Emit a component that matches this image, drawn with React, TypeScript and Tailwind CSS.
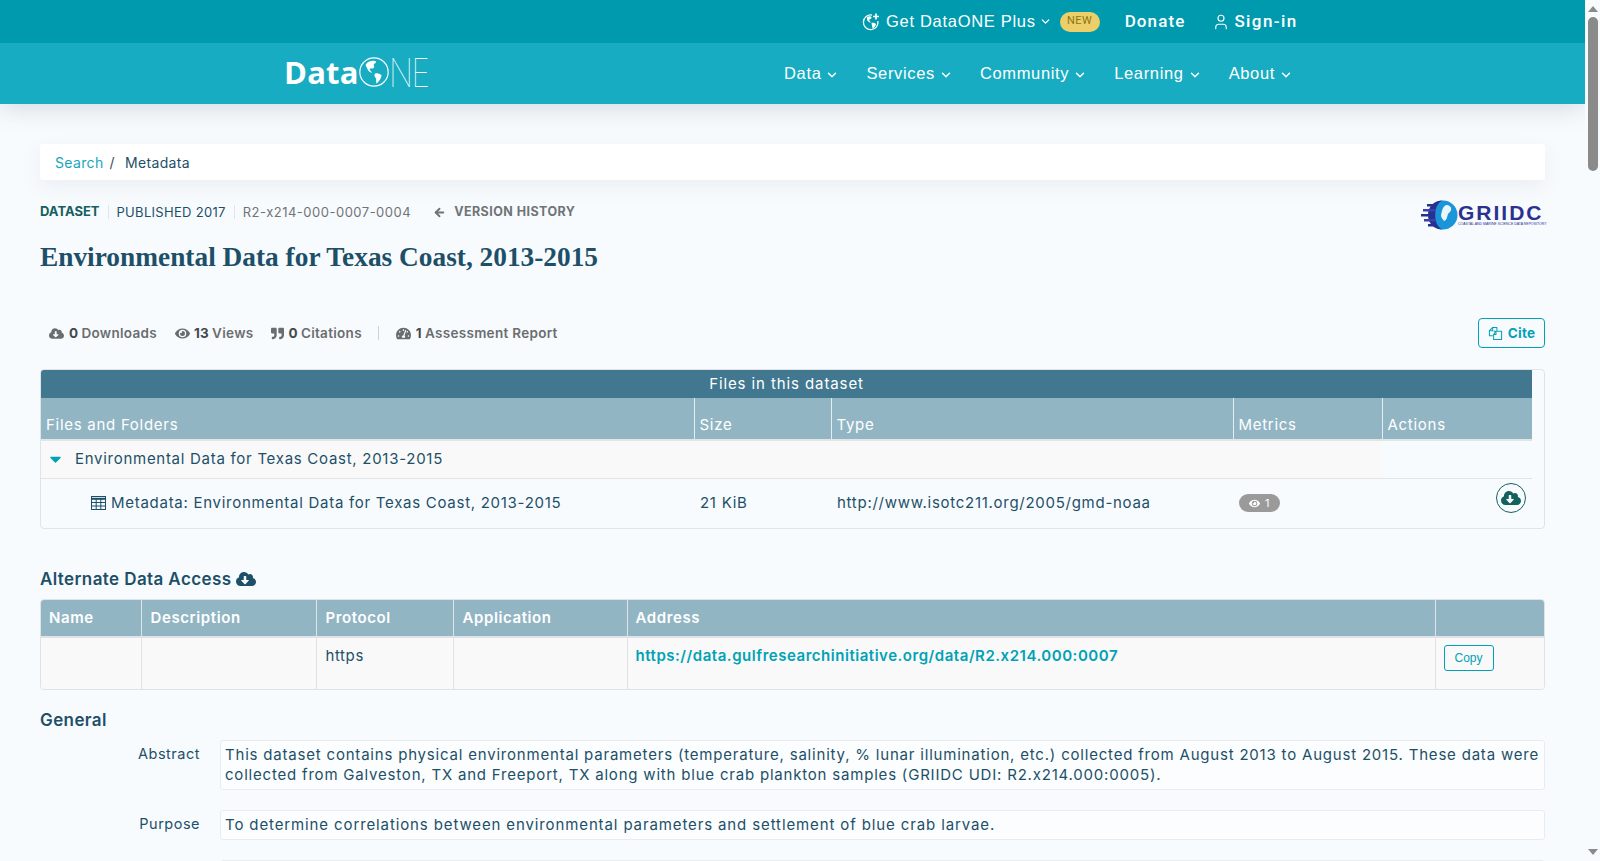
import { ArrowLeft, ChevronDown, User } from 'lucide-react';
import {
  FaCaretDown,
  FaCloudDownloadAlt,
  FaEye,
  FaQuoteRight,
  FaTachometerAlt,
} from 'react-icons/fa';

const navLinks = ['Data', 'Services', 'Community', 'Learning', 'About'];

function Globe() {
  return (
    <svg viewBox="0 0 36 36" className="w-[30px] h-[30px] shrink-0">
      <circle cx="18" cy="18" r="17" fill="none" stroke="white" strokeWidth="1.4" />
      <path d="M8 9c3-4 8-5 12-4 1 1 0 3-2 3-1 2 1 3 0 5-2 2-4 0-5 1-1 2 2 3 3 5-2 0-5-2-6-5-1-2-2-3-2-5z" fill="white" />
      <path d="M19 20c3-1 6 0 8 2 0 3-3 8-6 10-1-3 0-5-1-7-1-1-2-3-1-5z" fill="white" />
    </svg>
  );
}

function Logo() {
  return (
    <div className="flex items-end text-white leading-none h-[32px]">
      <span className="font-['Open_Sans'] font-bold text-[31px] leading-[30px] tracking-[0.2px]">Data</span>
      <Globe />
      <span className="font-['Inter'] font-thin text-[40px] leading-[29px] tracking-[-2px] scale-x-[0.78] origin-left">NE</span>
    </div>
  );
}

function PlusGlobe() {
  return (
    <svg viewBox="0 0 18 18" className="w-[18px] h-[18px]" fill="none" stroke="white">
      <path d="M10 2.100A7.300 7.300 0 1 0 15.900 8" strokeWidth="1.300" />
      <path d="M5 4c2-1 4-1 4.500 0 .3 1.500-1 2-2 2.500-1 1 1 2 1.500 3-1.500.5-3-1-4-2.500z" fill="white" stroke="none" />
      <path d="M9.500 10c1.500-.5 3.500 0 4.500 1-.3 2-2 3.500-3.500 4.500-.5-1.500-.2-2.500-.7-3.500z" fill="white" stroke="none" />
      <path d="M14 0.500v6M11 3.500h6" strokeWidth="1.700" />
    </svg>
  );
}

function DocsIcon() {
  return (
    <svg viewBox="0 0 16 16" className="w-[15px] h-[15px] mr-[5px]" fill="none" stroke="currentColor" strokeWidth="1.100" strokeLinejoin="round">
      <path d="M5 10.500H1.500V5L5 1.500h4.500V5" />
      <path d="M1.500 5H5V1.500" />
      <path d="M6 5.500h8.500V14.500H6V9l2.500-3.500" />
      <path d="M6 9h2.500V5.500" />
    </svg>
  );
}

function GridIcon() {
  return (
    <svg viewBox="0 0 15 14" className="w-[15px] h-[14px]" fill="none" stroke="currentColor" strokeWidth="1">
      <rect x="0.500" y="0.500" width="14" height="13" />
      <path d="M0.500 2.800h14" strokeWidth="2" />
      <path d="M0.500 6.500h14M0.500 10h14M5.200 3v10.500M9.800 3v10.500" />
    </svg>
  );
}

function Griidc() {
  return (
    <div className="flex items-center h-[32px] w-[124px] mt-[4px]">
      <svg viewBox="0 0 38 32" className="w-[38px] h-[32px] shrink-0">
        <circle cx="22" cy="16" r="14.5" fill="#1b95d9" />
        <path d="M25 6c3 0 6 2 5 5-1 3-2 2-3 4-1 3-1 6-4 7-1-2-3-3-3-6 1-3 1-8 5-10z" fill="#eaf6fc" />
        <path d="M22 1.500c-4 1-6 5-7 8s-1 10 0 13 3 7 7 8c-9 0-15-6-15-14.500S13 1.500 22 1.500z" fill="#27318f" />
        <rect x="6" y="5" width="8" height="2.500" fill="#27318f" />
        <rect x="2" y="10" width="12" height="2.500" fill="#3b3fb0" />
        <rect x="0" y="15" width="12" height="2.500" fill="#27318f" />
        <rect x="3" y="20" width="11" height="2.500" fill="#3b3fb0" />
        <rect x="7" y="25" width="9" height="2.500" fill="#27318f" />
      </svg>
      <div className="flex flex-col -ml-[1px] mt-[1px]">
        <span className="font-['Liberation_Sans'] font-bold text-[21px] leading-[18px] tracking-[2px] text-[#2b318f]">GRIIDC</span>
        <span className="font-['Liberation_Sans'] text-[3.500px] leading-[5px] text-[#2b318f] whitespace-nowrap">COASTAL AND MARINE SCIENCE DATA REPOSITORY</span>
      </div>
    </div>
  );
}

function Stat({ icon, count, label, gap }: { icon: React.ReactNode; count: string; label: string; gap: string }) {
  return (
    <span className="flex items-center">
      {icon}
      <b className={`${gap} mr-[3px] font-bold text-[#44494c]`}>{count}</b>
      <span>{label}</span>
    </span>
  );
}

export default function App() {
  return (
    <div className="flex h-[861px] overflow-hidden bg-[#f8fbfe] font-['Inter'] text-[#1d5068]">
      <div className="w-[1585px] shrink-0">
        {/* Top bars */}
        <header className="shadow-[0_4px_24px_rgba(40,70,90,0.18)]">
          <div className="h-[43px] bg-[#009aae] flex items-center text-white pl-[862px]">
            <PlusGlobe />
            <span className="ml-[6px] font-['Liberation_Sans'] text-[16.500px] tracking-[0.7px]">Get DataONE Plus</span>
            <ChevronDown className="w-[13px] h-[13px] ml-[3px]" strokeWidth={2.500} />
            <span className="ml-[8px] h-[20px] w-[40px] rounded-[10px] bg-[#eccf68] text-[#8c7414] text-[11px] flex items-center justify-center font-['Roboto'] tracking-[0.5px]">NEW</span>
            <span className="ml-[25px] font-['Roboto'] font-medium text-[17px] tracking-[1.1px]">Donate</span>
            <User className="w-[18px] h-[18px] ml-[27px]" strokeWidth={1.500} />
            <span className="ml-[4px] font-['Roboto'] font-medium text-[17px] tracking-[1.400px]">Sign-in</span>
          </div>
          <div className="h-[61px] bg-[#17acc1] flex items-center text-white">
            <div className="ml-[284px] w-[500px] -mt-[5px]">
              <Logo />
            </div>
            <nav className="flex gap-[27px] font-['Liberation_Sans'] text-[16.500px] tracking-[0.65px]">
              {navLinks.map((link) => (
                <span key={link} className="flex items-center">
                  {link}
                  <ChevronDown className="w-[14px] h-[14px] ml-[4px] mt-[2px]" strokeWidth={2.500} />
                </span>
              ))}
            </nav>
          </div>
        </header>

        <main className="px-[40px]">
          {/* Breadcrumb */}
          <div className="mt-[40px] h-[36px] rounded-[3px] bg-white pl-[15px] flex items-center text-[14px] tracking-[0.35px] shadow-[0_6px_20px_rgba(40,70,90,0.07)]">
            <span className="text-[#17a6ba]">Search</span>
            <span className="ml-[6px] text-[#44494c]">/</span>
            <span className="ml-[10px]">Metadata</span>
          </div>

          {/* Dataset meta */}
          <div className="mt-[15px] flex justify-between items-start">
            <div className="flex items-center h-[32px] text-[13px] mt-[1px]">
              <span className="font-bold text-[#14605f]">DATASET</span>
              <span className="ml-[8px] pl-[8px] border-l border-[#dfe5e8] leading-[14px] tracking-[0.3px]">PUBLISHED 2017</span>
              <span className="ml-[8px] pl-[8px] border-l border-[#dfe5e8] leading-[14px] text-[#6f7478] tracking-[0.5px]">R2-x214-000-0007-0004</span>
              <ArrowLeft className="ml-[22px] w-[13px] h-[13px] text-[#6f7478]" strokeWidth={3.500} />
              <span className="ml-[8px] font-bold text-[#6f7478] text-[12.500px] tracking-[0.45px]">VERSION HISTORY</span>
            </div>
            <Griidc />
          </div>

          <h1 className="mt-[8px] font-['Liberation_Serif'] font-bold text-[27.350px] leading-[36px] text-[#1d5068]">
            Environmental Data for Texas Coast, 2013-2015
          </h1>

          {/* Stats */}
          <div className="mt-[43px] flex justify-between items-center h-[30px]">
            <div className="flex items-center pl-[9px] text-[13.500px] tracking-[0.3px] font-semibold text-[#6a6d70]">
              <Stat gap="ml-[5px]" icon={<FaCloudDownloadAlt className="w-[15px] h-[15px]" />} count="0" label="Downloads" />
              <span className="ml-[18px]">
                <Stat gap="ml-[4px]" icon={<FaEye className="w-[15px] h-[15px]" />} count="13" label="Views" />
              </span>
              <span className="ml-[18px]">
                <Stat gap="ml-[4px]" icon={<FaQuoteRight className="w-[13px] h-[13px]" />} count="0" label="Citations" />
              </span>
              <span className="ml-[16px] h-[14px] border-l border-[#ccd2d5]" />
              <span className="ml-[17px]">
                <Stat gap="ml-[5px]" icon={<FaTachometerAlt className="w-[15px] h-[15px]" />} count="1" label="Assessment Report" />
              </span>
            </div>
            <button className="h-[30px] w-[67px] rounded-[4px] border border-[#00a2b5] text-[#00a2b5] text-[13.500px] tracking-[0.3px] font-bold flex items-center justify-center">
              <DocsIcon />
              Cite
            </button>
          </div>

          {/* Files table */}
          <div className="mt-[21px] h-[160px] rounded-[4px] border border-[#e0e4e6] pr-[12px]">
            <div className="h-[28px] bg-[#41778f] text-white text-[15px] tracking-[0.9px] flex items-center justify-center rounded-tl-[3px]">Files in this dataset</div>
            <table className="w-full table-fixed border-collapse text-[15px] tracking-[0.72px]">
              <thead>
                <tr className="h-[42px] bg-[#92b5c4] text-white text-left align-bottom">
                  <th className="w-[653px] font-normal pl-[5px] pb-[3px]">Files and Folders</th>
                  <th className="w-[137px] font-normal pl-[5px] pb-[3px] border-l border-[#e4edf1]">Size</th>
                  <th className="w-[402px] font-normal pl-[5px] pb-[3px] border-l border-[#e4edf1]">Type</th>
                  <th className="w-[149px] font-normal pl-[5px] pb-[3px] border-l border-[#e4edf1]">Metrics</th>
                  <th className="font-normal pl-[5px] pb-[3px] border-l border-[#e4edf1]">Actions</th>
                </tr>
              </thead>
              <tbody>
                <tr className="h-[38px] border-t-2 border-b border-[#e2e5e7]">
                  <td colSpan={4} className="bg-[#f9f9f9] pl-[8px]">
                    <span className="flex items-center">
                      <FaCaretDown className="w-[13px] h-[18px] text-[#00a2b5]" />
                      <span className="ml-[13px]">Environmental Data for Texas Coast, 2013-2015</span>
                    </span>
                  </td>
                  <td />
                </tr>
                <tr className="h-[50px]">
                  <td className="pl-[50px]">
                    <span className="flex items-center">
                      <GridIcon />
                      <span className="ml-[5px]">Metadata: Environmental Data for Texas Coast, 2013-2015</span>
                    </span>
                  </td>
                  <td className="pl-[6px]">21 KiB</td>
                  <td className="pl-[6px]">http://www.isotc211.org/2005/gmd-noaa</td>
                  <td className="pl-[6px]">
                    <span className="inline-flex items-center justify-center w-[41px] h-[18px] rounded-[9px] bg-[#9a9a9a] text-white text-[11px] mt-[3px]">
                      <FaEye className="w-[11px] h-[11px] mr-[5px]" />1
                    </span>
                  </td>
                  <td className="text-right pr-[6px]">
                    <span className="inline-flex items-center justify-center w-[30px] h-[30px] rounded-full border border-[#14605f] text-[#14605f] -mt-[9px]">
                      <FaCloudDownloadAlt className="w-[20px] h-[20px]" />
                    </span>
                  </td>
                </tr>
              </tbody>
            </table>
          </div>

          {/* Alternate data access */}
          <h2 className="mt-[38px] flex items-center text-[17px] tracking-[0.4px] leading-[24px] font-semibold">
            Alternate Data Access
            <FaCloudDownloadAlt className="ml-[5px] w-[20px] h-[20px]" />
          </h2>
          <div className="mt-[8px] rounded-[4px] border border-[#dfe3e5] overflow-hidden">
            <table className="w-full table-fixed border-collapse text-[15px] tracking-[0.6px]">
              <thead>
                <tr className="h-[37px] bg-[#92b5c4] text-white text-left">
                  <th className="w-[100px] pl-[8px] font-semibold">Name</th>
                  <th className="w-[175px] pl-[9px] font-semibold border-l border-[#dfe3e5]">Description</th>
                  <th className="w-[137px] pl-[9px] font-semibold border-l border-[#dfe3e5]">Protocol</th>
                  <th className="w-[174px] pl-[9px] font-semibold border-l border-[#dfe3e5]">Application</th>
                  <th className="w-[808px] pl-[8px] font-semibold border-l border-[#dfe3e5]">Address</th>
                  <th className="border-l border-[#dfe3e5]" />
                </tr>
              </thead>
              <tbody>
                <tr className="h-[52px] bg-[#f9f9f9] border-t-2 border-[#dfe3e5] align-top">
                  <td />
                  <td className="border-l border-[#dfe3e5]" />
                  <td className="pl-[9px] pt-[7px] border-l border-[#dfe3e5]">https</td>
                  <td className="border-l border-[#dfe3e5]" />
                  <td className="pl-[8px] pt-[7px] border-l border-[#dfe3e5] font-semibold tracking-[0.53px] text-[#00a2b5]">https://data.gulfresearchinitiative.org/data/R2.x214.000:0007</td>
                  <td className="pl-[8px] pt-[7px] border-l border-[#dfe3e5]">
                    <button className="w-[50px] h-[26px] rounded-[3px] border border-[#00a2b5] text-[#00a2b5] font-['Liberation_Sans'] tracking-normal text-[12px]">Copy</button>
                  </td>
                </tr>
              </tbody>
            </table>
          </div>

          {/* General */}
          <h2 className="mt-[18px] text-[17px] tracking-[0.4px] leading-[24px] font-semibold">General</h2>
          <dl className="mt-[8px] flex flex-col gap-[20px] text-[15px]">
            <div className="flex">
              <dt className="w-[160px] text-right pt-[3px] text-[14.500px] tracking-[0.5px]">Abstract</dt>
              <dd className="ml-[20px] flex-1 rounded-[3px] border border-[#e8ecee] bg-[#fbfdfe] px-[4px] py-[4px] leading-[20px] tracking-[0.8px]">
                This dataset contains physical environmental parameters (temperature, salinity, % lunar illumination, etc.) collected from August 2013 to August 2015. These data were collected from Galveston, TX and Freeport, TX along with blue crab plankton samples (GRIIDC UDI: R2.x214.000:0005).
              </dd>
            </div>
            <div className="flex">
              <dt className="w-[160px] text-right pt-[3px] text-[14.500px] tracking-[0.5px]">Purpose</dt>
              <dd className="ml-[20px] flex-1 rounded-[3px] border border-[#e8ecee] bg-[#fbfdfe] px-[4px] py-[4px] leading-[20px] tracking-[0.88px]">
                To determine correlations between environmental parameters and settlement of blue crab larvae.
              </dd>
            </div>
            <div className="ml-[180px] h-[20px] rounded-[3px] border border-[#e8ecee] bg-[#fbfdfe]" />
          </dl>
        </main>
      </div>

      {/* Scrollbar */}
      <aside className="w-[15px] shrink-0 flex flex-col items-center bg-[#f8fbfe]">
        <span className="mt-[6px] w-0 h-0 border-x-[5px] border-x-transparent border-b-[6px] border-b-[#8a8a8a]" />
        <span className="mt-[5px] w-[10px] h-[154px] rounded-[5px] bg-[#8a8a8a]" />
        <span className="mt-auto mb-[6px] w-0 h-0 border-x-[5px] border-x-transparent border-t-[6px] border-t-[#8a8a8a]" />
      </aside>
    </div>
  );
}
